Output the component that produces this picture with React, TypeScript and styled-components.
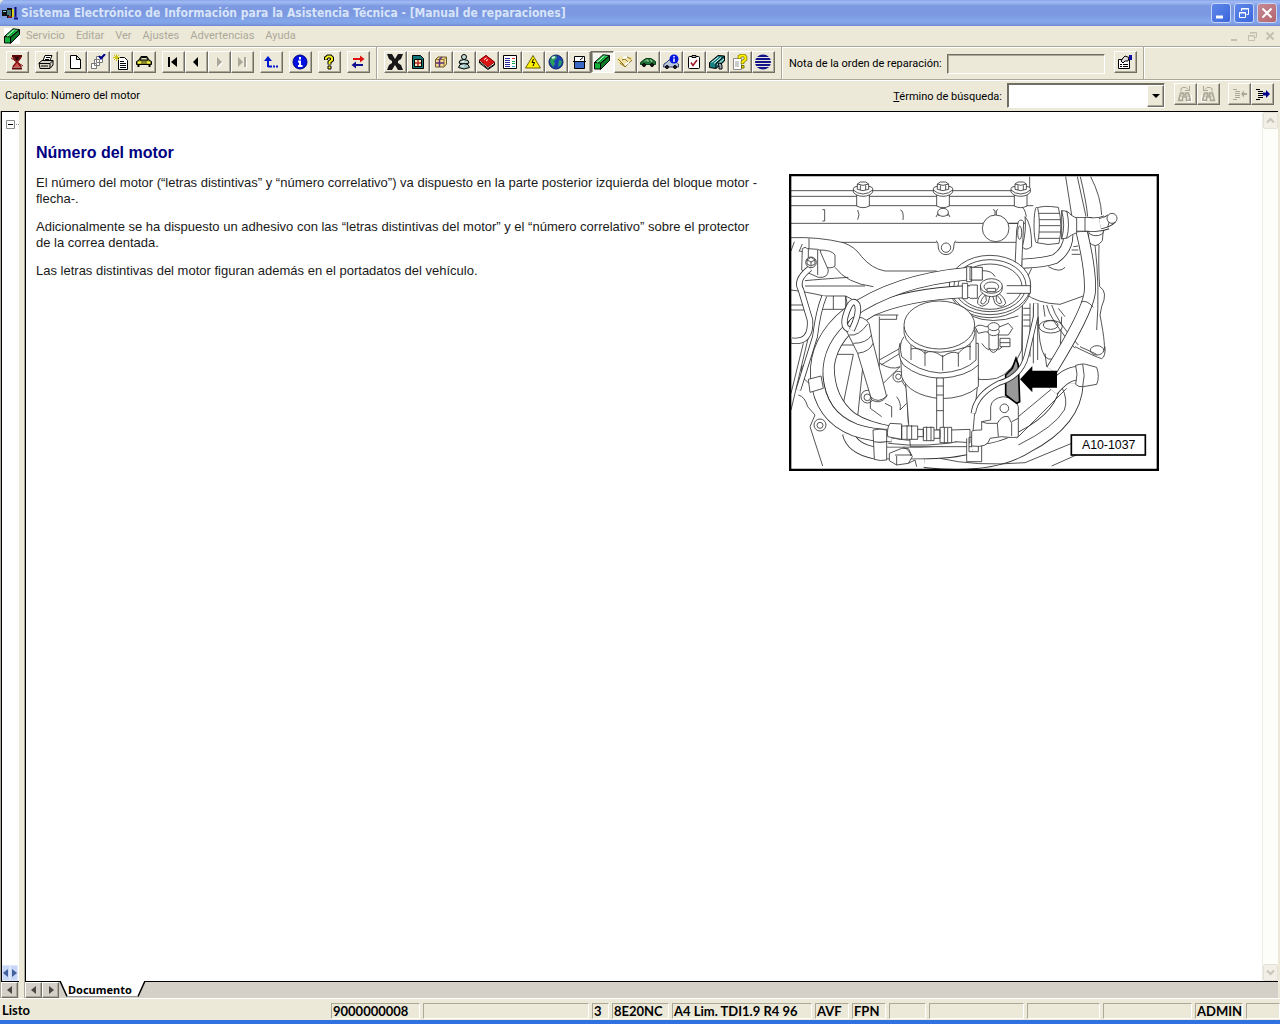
import React from "react";
import styled, { createGlobalStyle, css } from "styled-components";

const ui = `Roboto, "Noto Sans", sans-serif`;
const bold = `Lato, "Noto Sans", sans-serif`;
const face = "#ece9d8";
const shade = "#aca899";

const Global = createGlobalStyle`
  * { box-sizing: border-box; }
  body { margin: 0; background: ${face}; font: 11px/14px ${ui}; color: #000; }
  button, input, select { font: inherit; color: inherit; border-radius: 0; margin: 0; }
  svg { display: block; }
`;

const Window = styled.div`
  display: flex;
  flex-direction: column;
  height: 100vh;
  background: ${face};
  border-bottom: 4px solid #2f71e0;
`;

const TitleBar = styled.header`
  display: flex;
  align-items: center;
  gap: 3px;
  height: 26px;
  flex: none;
  padding: 0 3px 0 2px;
  background: linear-gradient(#8aa6ea 0, #a0bbf3 2px, #7d99e2 6px, #7b98e0 14px, #84a6ea 21px, #7e9fe5 24px, #6c86cf 26px);
  border-top-left-radius: 5px;
`;

const Title = styled.h1`
  flex: 1;
  margin: 0;
  color: #d8e4f8;
  font: bold 12px/18px "DejaVu Sans Condensed", "DejaVu Sans", sans-serif;
  white-space: nowrap;
  overflow: hidden;
`;

const WinButton = styled.button<{ $close?: boolean }>`
  width: 20px;
  height: 20px;
  padding: 0;
  display: grid;
  place-items: center;
  border: 1px solid #c7d4f5;
  border-radius: 3px;
  background: ${(p) => (p.$close ? "linear-gradient(135deg, #c58a96, #b5656b)" : "linear-gradient(135deg, #6088ea, #3a66dc)")};
`;

const MenuBar = styled.nav`
  display: flex;
  align-items: center;
  gap: 1px;
  height: 20px;
  flex: none;
  padding: 0 4px;
  color: ${shade};
`;

const MenuItem = styled.button`
  border: 0;
  background: none;
  padding: 0 5px;
  line-height: 16px;
  color: ${shade};
`;

const MdiIcon = styled.span`
  background: #fff;
`;

const MdiButtons = styled.div`
  display: flex;
  gap: 6px;
  margin-left: auto;
`;

const MdiButton = styled.button`
  border: 0;
  background: none;
  padding: 0;
  width: 12px;
  height: 12px;
`;

const ToolBar = styled.div`
  display: flex;
  align-items: stretch;
  height: 34px;
  flex: none;
  border-top: 1px solid ${shade};
  border-bottom: 1px solid ${shade};
  box-shadow: inset 0 1px #fff, 0 1px #fff;
`;

const Band = styled.div<{ $gap?: number }>`
  display: flex;
  align-items: center;
  gap: ${(p) => p.$gap ?? 0}px;
  padding: 0 6px 2px;
  border-right: 1px solid ${shade};
  box-shadow: 1px 0 #fff;
  & + & {
    padding-left: 7px;
  }
`;

const Group = styled.div`
  display: flex;
`;

const raised = css`
  border: 1px solid;
  border-color: #fff #716f64 #716f64 #fff;
  box-shadow: inset -1px -1px ${shade};
`;

const ToolButton = styled.button<{ $pressed?: boolean }>`
  ${raised}
  width: 23px;
  height: 22px;
  padding: 0 1px 1px 0;
  display: grid;
  place-items: center;
  background: ${face};
  ${(p) =>
    p.$pressed &&
    css`
      border-color: #716f64 #fff #fff #716f64;
      box-shadow: inset 1px 1px ${shade};
      background: #f7f6f0;
    `}
`;

const NoteInput = styled.input`
  width: 158px;
  height: 20px;
  border: 1px solid;
  border-color: #716f64 #fff #fff #716f64;
  box-shadow: inset 1px 1px ${shade};
  background: ${face};
`;

const NoteBand = styled(Band)`
  label { margin-right: 5px; padding-top: 3px; }
  input { margin-top: 3px; }
  button { margin-left: 9px; }
`;

const SearchBar = styled.div`
  display: flex;
  align-items: flex-start;
  height: 31px;
  flex: none;
  padding: 3px 6px 0 5px;
`;

const Chapter = styled.span`
  flex: 1;
  padding-top: 6px;
`;

const SearchLabel = styled.label`
  padding: 7px 5px 0 0;
`;

const Combo = styled.span`
  display: flex;
  position: relative;
  width: 158px;
  height: 25px;
  margin-right: 9px;
  select {
    appearance: none;
    width: 100%;
    height: 100%;
    padding: 0 18px 0 4px;
    background: #fff;
    border: 1px solid;
    border-color: #716f64 #fff #fff #716f64;
    box-shadow: inset 1px 1px #716f64;
  }
`;

const ComboArrow = styled.span`
  ${raised}
  position: absolute;
  right: 1px;
  top: 2px;
  bottom: 1px;
  width: 17px;
  display: grid;
  place-items: center;
  background: ${face};
  pointer-events: none;
`;

const SearchTools = styled.div`
  display: flex;
  margin-right: 8px;
  &:last-child { margin-right: 0; }
`;

const Body = styled.div`
  display: flex;
  flex: 1;
  min-height: 0;
  padding-right: 2px;
  gap: 5px;
`;

const pane = css`
  display: flex;
  flex-direction: column;
  border-left: 1px solid ${shade};
  > :first-child {
    border-top: 1px solid #000;
    border-left: 1px solid #000;
  }
`;

const TreePane = styled.aside`
  ${pane}
  width: 19px;
  background: #fff;
`;

const TreeArea = styled.div`
  flex: 1;
  display: flex;
  flex-direction: column;
  justify-content: space-between;
  align-items: flex-end;
  padding-top: 8px;
`;

const TreeNode = styled.button`
  width: 13px;
  height: 9px;
  padding: 0;
  border: 0;
  background: none;
`;

const MiniScroll = styled.div`
  display: flex;
  width: 17px;
  button {
    width: 8px;
    height: 16px;
    padding: 0;
    border: 1px solid #dfe8fb;
    background: #c8d6f8;
    display: grid;
    place-items: center;
  }
`;

const DocPane = styled.main`
  ${pane}
  flex: 1;
  min-width: 0;
`;

const DocArea = styled.div`
  flex: 1;
  min-height: 0;
  display: flex;
  background: #fff;
`;

const Article = styled.article`
  flex: 1;
  padding: 32px 0 0 10px;
  font: 13px/16px "Liberation Sans", Arial, sans-serif;
  color: #1a1a1a;
`;

const Heading = styled.h2`
  margin: 0;
  color: #000080;
  font-size: 16px;
  line-height: 18px;
`;

const Columns = styled.div`
  display: grid;
  grid-template-columns: minmax(0, 3fr) minmax(0, 2fr);
  padding-top: 12px;
`;

const Copy = styled.div`
  padding: 1px 12px 0 0;
  p { margin: 0 0 12px; }
`;

const Figure = styled.figure`
  margin: 0;
  padding-left: 17px;
  svg { max-width: 100%; }
`;

const ScrollBar = styled.div`
  width: 16px;
  flex: none;
  display: flex;
  flex-direction: column;
  justify-content: space-between;
  border-left: 1px solid #eeede5;
  background: #fdfdfa;
  button {
    width: 15px;
    height: 17px;
    padding: 0;
    display: grid;
    place-items: center;
    border: 1px solid #e4e2d8;
    border-radius: 2px;
    background: #f1efe6;
  }
`;

const TabStrip = styled.div`
  display: flex;
  height: 17px;
  flex: none;
  background: #d4d0c8;
  border-top: 1px solid #000;
`;

const TabArrow = styled.button`
  ${raised}
  width: 17px;
  height: 16px;
  padding: 0;
  display: grid;
  place-items: center;
  background: #d4d0c8;
`;

const Tab = styled.button`
  position: relative;
  width: 87px;
  height: 16px;
  margin-top: -1px;
  padding: 0 0 0 9px;
  border: 0;
  background: none;
  text-align: left;
  font: bold 11px/17px "Noto Sans", sans-serif;
  svg { position: absolute; left: 0; top: 0; z-index: 0; }
  span { position: relative; }
`;

const StatusBar = styled.footer`
  display: flex;
  gap: 3px;
  height: 22px;
  flex: none;
  padding: 4px 0 1px 1px;
  border-top: 1px solid #fff;
  font: bold 13px/15px ${bold};
`;

const StatusCell = styled.span<{ $w?: number }>`
  ${(p) =>
    p.$w
      ? css`
          width: ${p.$w}px;
          border: 1px solid;
          border-color: ${shade} #fff #fff ${shade};
        `
      : css`
          flex: 1;
        `}
  padding-left: 1px;
  white-space: nowrap;
  overflow: hidden;
`;

const Ic = ({ children, w = 16, h = 16 }: { children: React.ReactNode; w?: number; h?: number }) => (
  <svg width={w} height={h} viewBox={`0 0 ${w} ${h}`} fill="none" stroke="#000" aria-hidden="true">
    {children}
  </svg>
);

const GreenBox = () => (
  <Ic>
    <path d="M6.500 9.500 15.500 2V6.500L6.500 15.500Z" fill="#0c7a26" />
    <path d="M.5 8.500H6.500V15H.5Z" fill="#12b13a" />
    <path d="M.5 8.500 9 .8 15.500 1.500 6.500 9Z" fill="#30cf55" />
    <path d="M5 7.500 11 2.500" stroke="#0a3" strokeWidth="2" />
    <path d="M3 8.500 10.500 1.800" stroke="#fff" strokeWidth=".8" />
  </Ic>
);

const icons: Record<string, React.ReactNode> = {
  exit: (
    <Ic>
      <path d="M3 2H13M3 14.500H13" stroke="#5c0808" strokeWidth="2" />
      <path d="M4 3 12 13M12 3 4 13" stroke="#7a1010" strokeWidth="2" />
      <path d="M5 3H11L8 7Z" fill="#2a0505" stroke="none" />
      <path d="M8 9 11 13H5Z" fill="#d85050" stroke="none" />
      <path d="M2 4 14 12" stroke="#8c1515" />
    </Ic>
  ),
  print: (
    <Ic>
      <path d="M5 6.500 7 1.500H14L12 6.500Z" fill="#fff" />
      <path d="M1 9 4 6.500H15V11L12 14.500H2Z" fill="#d6d3c6" />
      <path d="M1 9.500H12V14M12 9.500 15 6.500M8 3.500H12M7 5.500H11M3 12H10" />
    </Ic>
  ),
  page: (
    <Ic>
      <path d="M3.500 1.500H9.500L13.500 5.500V14.500H3.500ZM9.500 1.500V5.500H13.500" fill="#fff" />
    </Ic>
  ),
  pages: (
    <Ic>
      <path d="M6.500 2.500H12.500V8.500H6.500ZM4.500 5.500H9.500V11.500H4.500ZM1.500 9.500H6.500V14.500H1.500Z" fill="#fff" stroke="#777" />
      <path d="M9 2 11 4.500 15 0" stroke="#00008b" strokeWidth="2" />
    </Ic>
  ),
  newPage: (
    <Ic>
      <path d="M5.500 3.500H11.500L14.500 6.500V15.500H5.500Z" fill="#fff" />
      <path d="M7 7.500H11M7 9.500H13M7 11.500H13M7 13.500H13" />
      <path d="M3.500 0V7M0 3.500H7M1 1 6 6M6 1 1 6" stroke="#cfc518" />
    </Ic>
  ),
  carFront: (
    <Ic>
      <path d="M3 6 5 2.500H11L13 6 15.500 7.500V10.500H.5V7.500Z" fill="#85852a" />
      <path d="M4 6 5.500 3.500H10.500L12 6Z" fill="#e3e3c0" />
      <path d="M2 8.500H5M11 8.500H14" stroke="#ffff40" strokeWidth="2" />
      <path d="M2.500 11V13M13.500 11V13" strokeWidth="2" />
    </Ic>
  ),
  first: (
    <Ic>
      <path d="M4 3V13" strokeWidth="2" />
      <path d="M12 3V13L6 8Z" fill="#000" stroke="none" />
    </Ic>
  ),
  prev: (
    <Ic>
      <path d="M10 3V13L5 8Z" fill="#000" stroke="none" />
    </Ic>
  ),
  next: (
    <Ic>
      <path d="M7 4V14L12 9Z" fill="#fff" stroke="none" />
      <path d="M6 3V13L11 8Z" fill={shade} stroke="none" />
    </Ic>
  ),
  last: (
    <Ic>
      <path d="M4 3V13L9 8Z" fill={shade} stroke="none" />
      <path d="M11 3V13" stroke={shade} strokeWidth="2" />
      <path d="M12.500 4V14" stroke="#fff" />
    </Ic>
  ),
  up: (
    <Ic>
      <path d="M5 13V4M5 12.500H9" stroke="#0018d0" strokeWidth="2" />
      <path d="M5 2 1 7H9Z" fill="#0018d0" stroke="none" />
      <path d="M10 12.500H12M13 12.500H15" stroke="#0018d0" strokeWidth="2" />
    </Ic>
  ),
  info: (
    <Ic>
      <circle cx="8" cy="8" r="7" fill="#0010e0" stroke="#000080" />
      <path d="M8 3V5.500M6 7.500H8V12M6 12H10.500" stroke="#fff" strokeWidth="2" />
    </Ic>
  ),
  help: (
    <Ic>
      <path d="M5 6V4L7 2.500H9.500L11 4V6L8.500 8V10.500" strokeWidth="4" />
      <path d="M5 5.500V4L7 2.500H9.500L11 4V6L8.500 8V10" stroke="#f5ee20" strokeWidth="2" />
      <path d="M7 12H10V15H7Z" fill="#f5ee20" />
    </Ic>
  ),
  swap: (
    <Ic>
      <path d="M3 5H11" stroke="#e01010" strokeWidth="2" />
      <path d="M10 1.500 14.500 5 10 8.500Z" fill="#e01010" stroke="none" />
      <path d="M5 11H13" stroke="#101090" strokeWidth="2" />
      <path d="M6 7.500 1.500 11 6 14.500Z" fill="#101090" stroke="none" />
    </Ic>
  ),
  cross: (
    <Ic>
      <path d="M0 0H5L8 5 11 0H16L14 5 11 7 11 9 14 11 16 16H11L8 11 5 16H0L2 11 5 9V7L2 5Z" fill="#171717" stroke="none" />
    </Ic>
  ),
  docBox: (
    <Ic>
      <path d="M2.500 1.500H10.500L13.500 4.500V14.500H2.500Z" fill="#147878" />
      <path d="M4.500 5.500H11.500V12.500H4.500Z" fill="#f8f0c0" />
      <path d="M8 6V12M5 9H11" stroke="#b02828" strokeWidth="1.500" />
    </Ic>
  ),
  parcel: (
    <Ic>
      <path d="M2.500 5.500 5 3H13.500V10L11 13H2.500Z" fill="#f3d98c" stroke="#6b5a2a" />
      <path d="M3 5.500H11V13M11 5.500 13.500 3" stroke="#8c7030" />
      <path d="M6.500 5V13M6.500 5.500 9 3M3 9H11" stroke="#5a3080" strokeWidth="1.500" />
    </Ic>
  ),
  figure: (
    <Ic>
      <circle cx="8" cy="3" r="2.500" fill="#c4dedb" />
      <path d="M4 6.500 8 5.500 12 6.500 13 9 8 10.500 3 9Z" fill="#b6d4d0" />
      <path d="M4 10.500 8 9.500 12 10.500 13.500 13.500 8 15 2.500 13.500Z" fill="#a3c8c4" />
      <path d="M6 7.500H8M5 12H8" stroke="#fff" />
    </Ic>
  ),
  book: (
    <Ic>
      <path d="M.5 6.500 7 1.500 15.500 8.500V11L9 15.500 .5 9Z" fill="#fff" />
      <path d="M.5 6 7 1.500 15.500 8 9 13Z" fill="#dd1414" stroke="#900" />
      <path d="M5 5.500 7.500 4M7 7 9 5.500" stroke="#fff" />
      <path d="M1 8 9 14.500 15 10.500" />
    </Ic>
  ),
  list: (
    <Ic>
      <path d="M1.500 1.500H14.500V14.500H1.500Z" fill="#fff" />
      <path d="M3 4.500H8M3 6.500H8M3 8.500H8M3 10.500H8M3 12.500H8" stroke="#282898" />
      <path d="M10 4.500H13" stroke="#e03030" />
      <path d="M10 7.500H13M10 9.500H13" stroke="#16a050" />
      <path d="M10 12.500H13" stroke="#30a0d0" />
    </Ic>
  ),
  warning: (
    <Ic>
      <path d="M8 1.500 15.500 14H.5Z" fill="#fff000" stroke="#6a6400" />
      <path d="M8.500 5 7 8.500H9.500L8 12" />
    </Ic>
  ),
  globe: (
    <Ic>
      <circle cx="8" cy="8" r="7" fill="#1c3fb2" stroke="#0b2060" />
      <path d="M3 3 8 1.500 9 4 6 7 7 10 5 13 2 8Z" fill="#2ba05a" stroke="none" />
      <path d="M11 6 14 7 13 11 10 13Z" fill="#27a064" stroke="none" />
      <path d="M4 4 7 3" stroke="#d8f0e8" strokeWidth="2" />
    </Ic>
  ),
  tray: (
    <Ic>
      <path d="M3.500 2.500H13.500V7.500H3.500Z" fill="#fff" />
      <path d="M3.500 7.500H13.500V14.500H3.500Z" fill="#3a68c4" />
      <path d="M9 6 12 3.500M2 7.500H15" />
    </Ic>
  ),
  green: <GreenBox />,
  handshake: (
    <Ic>
      <path d="M0 5 4 2 8 5 15 2.500 16 5 8 13.500 2 10Z" fill="#f2e4a4" stroke="none" />
      <path d="M1 5 6 10 8 13 15 6M5 6 8 5 11 8M3 9 7 12M10 3 14 5" stroke="#8a6f22" />
      <path d="M6 4 10 3M12 8 8 11" stroke="#fff" strokeWidth="2" />
    </Ic>
  ),
  carSide: (
    <Ic>
      <path d="M.5 8.500 3 6.500 6 4.500H11L15.500 7.500V10.500H.5Z" fill="#1d7434" stroke="#0b4018" />
      <path d="M5 7.500 6.500 6H8V8M10 6H11L12 8" stroke="#b0d8b0" />
      <circle cx="4" cy="11" r="1.500" fill="#222" />
      <circle cx="12" cy="11" r="1.500" fill="#222" />
    </Ic>
  ),
  carInfo: (
    <Ic>
      <path d="M1 10 4 8 6 6H11L15.500 10V13H.5Z" fill="#b8c4dc" stroke="#34406a" />
      <circle cx="4" cy="13" r="1.500" fill="#223" />
      <circle cx="12" cy="13" r="1.500" fill="#223" />
      <circle cx="11" cy="5" r="4.500" fill="#0014e0" stroke="none" />
      <path d="M11 2V3.500M11 4.500V8" stroke="#fff" strokeWidth="1.500" />
    </Ic>
  ),
  clipboard: (
    <Ic>
      <rect x="2.500" y="2.500" width="11" height="12" rx="1" fill="#fff" />
      <path d="M6 1.500H10V3.500H6Z" fill="#bbb" />
      <path d="M5 8.500 7 11.500 11 6" stroke="#a01020" strokeWidth="1.500" />
    </Ic>
  ),
  books: (
    <Ic>
      <path d="M.5 8.500 9 1.500 15.500 2V7L7 14.500 .5 13.500Z" fill="#168080" />
      <path d="M2.500 8.500 9.500 3M5 9.500 12 3.500M7.500 11 15 5" stroke="#e8f4f4" />
      <path d="M7 9.500V14M7 9.500 15 2.500" />
      <path d="M9 9.500 11 9 13 11V15H10V12Z" fill="#9aacb8" />
    </Ic>
  ),
  helpDoc: (
    <Ic>
      <path d="M1.500 4.500H9.500V15.500H1.500Z" fill="#fff" stroke="#8a8a8a" />
      <path d="M3 8H7M3 10H7M3 12H7" stroke="#999" />
      <path d="M7.500 5V2.500L9.500 1.500H12L13.500 3V5.500L10.500 8V10" stroke="#6d6800" strokeWidth="3.500" />
      <path d="M7.500 4.500V2.500L9.500 1.500H12L13.500 3V5.500L10.500 8V9.500" stroke="#fff000" strokeWidth="2.200" />
      <path d="M9.500 11.500H12V14H9.500Z" fill="#fff000" stroke="#6d6800" />
    </Ic>
  ),
  stripes: (
    <Ic>
      <ellipse cx="8" cy="8" rx="8" ry="7.500" fill="#13138c" stroke="none" />
      <path d="M0 3.500H16M0 6.500H16M0 9.500H16M0 12.500H16" stroke={face} />
    </Ic>
  ),
  props: (
    <Ic>
      <path d="M1.500 5.500H12.500V14.500H1.500Z" fill="#fff" />
      <path d="M3 10.500H5M6 10.500H11M3 12.500H5M6 12.500H11M4 7 6 4 8 2 12 3.500 11 7H8L6 9Z" fill="#ddd" />
      <path d="M13.500 1V6" stroke="#1010a0" strokeWidth="3" />
    </Ic>
  ),
};

const Binoculars = ({ flip }: { flip?: boolean }) => (
  <Ic>
    <g transform={flip ? "matrix(-1 0 0 1 16 0)" : undefined} stroke={shade}>
      <path d="M4 5.500V2.500L6 1.500H9L11 3.500M8 4.500H12.500M12.500 0V5" />
      <path d="M3.500 7H6.500V9H8.500V7H11.500L13.500 14.500H9.500V11H5.500V14.500H1.500Z" fill="#d5d1c1" strokeWidth="1.500" />
      <path d="M4 11V13M11 11V13M14.500 9V15.500H10" stroke="#fff" />
    </g>
  </Ic>
);

const ListArrow = ({ right }: { right?: boolean }) => (
  <Ic>
    <g stroke={right ? "#000" : shade}>
      <path d="M2 3.500H6M4 5.500H9M4 7.500H9M4 9.500H9M4 11.500H9M2 13.500H6" />
      {right ? (
        <path d="M9 6.500H12V4L16 8 12 12V9.500H9Z" fill="#00008b" stroke="none" />
      ) : (
        <path d="M16 7H13V4.500L10 8 13 11.500V9H16Z" fill={shade} stroke="none" />
      )}
    </g>
  </Ic>
);

const Triangle = ({ right, color = "#4b4943" }: { right?: boolean; color?: string }) => (
  <Ic w={6} h={8}>
    <path d={right ? "M1 0V8L6 4Z" : "M5 0V8L0 4Z"} fill={color} stroke="none" />
  </Ic>
);

const Chevron = ({ down }: { down?: boolean }) => (
  <Ic w={9} h={7}>
    <path d={down ? "M1 1.500 4.500 5 8 1.500" : "M1 5.500 4.500 2 8 5.500"} stroke="#c9c6ba" strokeWidth="2" />
  </Ic>
);

/* A pipe is a dark stroke with a slightly thinner white one on top. */
const Pipe = ({ d, w }: { d: string; w: number }) => (
  <g fill="none">
    <path d={d} strokeWidth={w + 2} />
    <path d={d} stroke="#fff" strokeWidth={w - 3} />
  </g>
);

const Bolt = ({ x }: { x: number }) => (
  <g transform={`translate(${x} 0)`}>
    <path d="M-19 75V108Q0 118 19 108V75" />
    <path d="M-29 56Q-29 50 -17 49H17Q29 50 29 56V66Q22 78 0 79Q-22 78 -29 66Z" />
    <path d="M-29 60Q-18 71 0 72Q18 71 29 60" fill="none" />
    <path d="M-17 42V58Q0 66 17 58V42L8 36H-8ZM-17 42Q0 50 17 42M-8 46V60M8 46V60" />
  </g>
);

const Engine = () => (
  <svg width="370" height="297" viewBox="12 12 1110 891" role="img" aria-label="A10-1037" fill="#fff" stroke="#333" strokeWidth="2.500">
    <rect x="12" y="12" width="1110" height="891" stroke="none" />
    <g>
      {/* cylinder head */}
      <path d="M18 62H690M18 79H690M18 107H745M18 160H720M170 217H455M511 217H700" fill="none" />
      <path d="M112 119H119V153H112M218 120Q226 134 218 149M346 120Q357 122 354 150" fill="none" />
      <path d="M453 141 461 126M487 126 495 141M459 136H490" />
      <ellipse cx="474" cy="127" rx="16" ry="12" />
      <path d="M453 212Q460 216 460 234Q464 253 483 254Q502 253 506 234Q506 216 512 212" />
      <circle cx="483" cy="233" r="14" />
      <path d="M18 203Q100 200 175 218Q210 230 230 260Q260 296 300 303H455" fill="none" />
      <path d="M734 20V65M705 108Q720 112 724 140" fill="none" />
      <Bolt x={234} />
      <Bolt x={474} />
      <Bolt x={707} />
      <circle cx="632" cy="175" r="40" />
      <path d="M624 118 630 122V135M639 118 634 122V135M671 160H704" fill="none" />

      {/* long lines behind the hoses on the right */}
      <path d="M842 20 860 135M877 20 903 140M886 20Q905 100 908 140M917 20Q948 80 950 135" fill="none" />
      <path d="M720 370Q755 400 825 403L895 378" fill="none" />
      <path d="M860 240H880M865 230 880 228M860 253H885M790 290Q825 310 840 292M740 295 728 320" fill="none" />
      <path d="M930 225Q945 350 935 480M942 225Q940 300 944 350Q970 365 950 410L945 435Q965 540 955 545" fill="none" />
      <path d="M911 190V215Q932 240 952 212L955 180" />
      <ellipse cx="933" cy="185" rx="22" ry="12" />
      <ellipse cx="936" cy="541" rx="20" ry="14" />
      <path d="M870 530Q930 560 950 566Q962 560 960 530M885 530Q925 548 935 553" fill="none" />

      {/* lower right pipes and bracket */}
      <Pipe w={70} d="M420 858Q620 880 720 815Q855 745 860 640" />
      <path d="M700 740 820 640M695 805 845 655M700 825Q810 770 838 720Q850 690 830 650M465 865Q570 890 720 878L860 820M800 888 930 830" fill="none" />
      <Pipe w={41} d="M800 660Q850 600 890 612" />
      <path d="M872 586Q895 580 902 583L935 592Q945 620 935 643L895 650Q880 652 872 643Q880 612 872 586Z" />
      <path d="M893 583Q902 618 893 650" fill="none" />
      <path d="M760 440Q760 530 780 560Q800 580 825 550L830 440" />
      <ellipse cx="797" cy="470" rx="35" ry="19" />
      <ellipse cx="797" cy="465" rx="22" ry="13" />
      <path d="M780 550 785 590M825 550 820 585M785 405Q795 450 870 535M800 405Q815 455 880 525" fill="none" />
      <Pipe w={34} d="M890 185Q920 310 914 370Q905 430 800 600" />
      <path d="M888 396Q905 388 925 412" fill="none" />
      <path d="M712 400V590M735 400V560M745 410V580M758 400V570M715 415H735M715 435H735M715 450H735M715 468H735M775 405 780 440M820 415 840 440" fill="none" />

      {/* coolant cap and its outlets */}
      <Pipe w={28} d="M850 195Q850 240 810 267Q780 278 712 281" />
      <Pipe w={42} d="M869 163H910Q940 167 965 157" />
      <Pipe w={32} d="M945 161Q970 156 980 145" />
      <path d="M900 141V186M968 142Q976 158 968 172" fill="none" />
      <circle cx="981" cy="145" r="15" />
      <path d="M830 122Q850 122 858 135L875 145V188L860 195Q850 206 830 207Z" />
      <path d="M830 122Q842 165 830 207M845 122Q856 165 845 205" fill="none" />
      <path d="M755 115Q770 105 820 112Q834 165 822 220Q790 228 755 218Z" />
      <path d="M757 130H823M757 167H826M757 149H826M757 186H826M757 205H824" fill="none" />
      <ellipse cx="755" cy="165" rx="8" ry="54" />
      <path d="M720 140Q740 160 740 230Q720 245 712 230Q725 180 720 140Z" />
      <path d="M700 155Q708 145 716 155L710 290H690L695 180Z" />
      <ellipse cx="704" cy="188" rx="6" ry="20" />

      {/* left side brackets and sensor */}
      <path d="M18 243 28 215M42 245 52 222M44 243 55 246M72 205V245" fill="none" />
      <path d="M105 240Q140 240 150 255V288Q140 298 110 290Z" />
      <path d="M52 236Q60 228 68 236L98 238Q108 238 108 250L130 300Q130 325 100 322L50 300Z" />
      <path d="M70 236V285M98 240V315" fill="none" />
      <path d="M150 292Q185 340 265 350M60 332Q100 328 190 322M60 348H240M18 360Q60 365 118 378M18 405H60M18 420H60" fill="none" />
      <path d="M118 378H182V418H110M182 378Q190 400 182 418M145 378V418" fill="none" />
      <path d="M182 378 205 390" fill="none" />
      <path d="M18 720 80 460M18 670 55 520M40 675Q60 680 68 710L90 735 75 770 113 888M70 580 50 590V620L72 640" fill="none" />
      <Pipe w={17} d="M75 295Q30 330 48 360L75 450Q80 520 20 512" />
      <Pipe w={15} d="M118 378Q100 420 90 500L40 660" />
      <circle cx="78" cy="277" r="16" />
      <path d="M66 270 78 262 90 270V282L78 288 66 282ZM66 270 78 276 90 270M78 276V287" />

      {/* rear structure between the hoses */}
      <path d="M145 525H240L218 740M145 553H205L173 710M283 440V590M340 435H250M335 435V448H285" fill="none" />
      <path d="M283 570 345 535M288 585 345 550M285 580Q320 602 345 590M295 640 345 590" fill="none" />
      <path d="M345 625 365 655 370 760M335 680Q350 700 345 720L365 700" fill="none" />
      <circle cx="340" cy="620" r="16" />
      <circle cx="340" cy="620" r="8" />

      {/* fuel filter */}
      <path d="M560 405V620Q580 635 635 625Q680 610 710 540L712 400Z" />
      <ellipse cx="615" cy="351" rx="122" ry="92" />
      <ellipse cx="615" cy="345" rx="122" ry="89" />
      <ellipse cx="615" cy="347" rx="108" ry="78" />
      <ellipse cx="615" cy="350" rx="96" ry="68" />

      {/* big coolant hoses */}
      <Pipe w={36} d="M190 790Q200 835 270 849H395Q500 850 560 832" />
      <Pipe w={36} d="M575 365H545Q370 372 260 420Q140 490 130 590Q130 690 200 745Q290 805 550 800" />
      <Pipe w={38} d="M592 311H550Q330 330 190 430Q90 510 95 620Q105 740 210 780Q260 797 320 797" />
      <path d="M70 628 108 618 115 655 75 667Z" />
      <circle cx="105" cy="765" r="18" />
      <circle cx="105" cy="766" r="9" />

      {/* hose ends and bleed screw on the fuel filter */}
      <path d="M592 302Q622 302 630 320M555 292H592V330H555ZM555 345H577V385H555M665 347H736V370H665M545 290H560V335H545ZM532 340H548V386H532Z" />
      <path d="M600 365Q575 380 578 400Q590 418 610 398L615 375ZM632 365Q660 380 662 400Q650 418 630 400L622 375Z" />
      <path d="M602 374Q585 390 588 400Q596 406 604 392ZM634 374Q650 388 650 398Q642 406 634 392Z" />
      <ellipse cx="619" cy="355" rx="33" ry="25" />
      <ellipse cx="619" cy="348" rx="33" ry="22" />
      <ellipse cx="619" cy="350" rx="22" ry="14" />
      <path d="M606 355H632V365H606Z" />
      <path d="M560 438Q620 465 700 438M590 520Q600 535 612 540M640 540Q650 535 665 515" fill="none" />
      <path d="M571 472Q580 460 602 470H645L670 460 683 475 670 495H642L602 485 580 490Z" />
      <path d="M612 485V535Q624 560 640 535V485ZM645 505H675V530H645ZM645 518H675M612 535Q625 545 640 535" />
      <ellipse cx="626" cy="485" rx="17" ry="12" />
      <ellipse cx="626" cy="470" rx="17" ry="12" />

      {/* dipstick */}
      <circle cx="247" cy="680" r="19" />
      <circle cx="247" cy="682" r="10" />
      <path d="M183 480Q190 440 215 440Q255 445 255 475L262 510 305 680Q285 705 260 690L218 550Z" />
      <Pipe w={17} d="M192 478Q165 470 192 410Q205 385 217 405Q225 430 200 480" />
      <path d="M193 495Q220 500 248 462M205 520Q245 520 260 495M218 550Q255 545 264 520M256 680Q280 705 308 675M256 690V715L290 740M300 700 320 710V742" fill="none" />

      {/* oil filter */}
      <path d="M362 640 376 830H560L568 740 580 620Z" />
      <path d="M345 520 350 620Q370 675 465 686Q540 686 580 650V520Z" />
      <path d="M345 520Q335 555 355 585Q400 622 465 625Q545 620 580 585" />
      <path d="M357 500Q340 520 350 560Q400 605 465 609Q540 605 573 570V480" />
      <path d="M378 525V570M420 540V588M378 537Q400 530 420 550Q440 535 473 560Q500 540 520 550Q540 525 558 530M473 555V602M520 548V590M555 520V570" fill="none" />
      <path d="M357 470Q352 515 395 535Q465 560 540 532Q575 515 569 470" />
      <ellipse cx="463" cy="465" rx="106" ry="72" />
      <path d="M455 624V780H475V624ZM455 648H475M455 675H475M455 722H475" />

      {/* coupling and clamps at the bottom */}
      <path d="M310 820Q430 835 545 810" fill="none" />
      <path d="M315 760 350 762V808L308 800Q305 775 315 760ZM350 768 398 768V808L350 808ZM366 765V808M380 765V808M398 778H415V800H398M415 772H447V812H415ZM425 770V812M438 770V812M447 780H465V805H447M465 772H500V818H465ZM478 772V818M488 774V818M500 780 555 778V818L510 815" />
      <path d="M264 780Q285 775 305 780V870Q285 874 268 868ZM266 815Q285 820 305 815" />
      <path d="M313 850 350 835H370L382 860 370 880 335 885 313 872ZM330 855H380M335 858V885M355 832Q375 840 378 858M370 880 390 870 395 890" />
      <path d="M545 805V875H590V805M552 802H580V845H552Z" />
      <path d="M560 785Q560 780 590 780V755L617 750V710Q620 685 655 680Q695 685 700 710V800Q695 805 650 800L615 805Q610 835 560 828Z" />
      <path d="M590 755 605 760H637L640 800M637 760Q650 735 670 740L680 760V798M680 755 700 745" fill="none" />
      <circle cx="658" cy="715" r="13" />

      {/* stamped code area, its feed line and the arrow */}
      <path d="M693 565 700 585 704 695 695 700 662 675V615L682 595Z" fill="#999" stroke="#000" strokeWidth="5" />
      <Pipe w={14} d="M565 730Q572 675 640 640Q710 620 725 555L752 440V400" />
      <path d="M705 628 742 588V602H816V653H742V667Z" fill="#000" stroke="none" />
    </g>
    <rect x="859" y="795" width="222" height="60" stroke="#000" strokeWidth="5" />
    <text x="971" y="838" textAnchor="middle" fontFamily="'Liberation Sans', Arial, sans-serif" fontSize="37" fill="#000" stroke="none">
      A10-1037
    </text>
    <path d="M0 0H1140V920H0ZM19 19V896H1115V19Z" fill="#000" fillRule="evenodd" stroke="none" />
  </svg>
);

const singles: [string, string][] = [
  ["up", "Subir"],
  ["info", "Información"],
  ["help", "Ayuda"],
  ["swap", "Cambiar"],
];
const modules = ["cross", "docBox", "parcel", "figure", "book", "list", "warning", "globe", "tray", "green", "handshake", "carSide", "carInfo", "clipboard", "books", "helpDoc", "stripes"];
const status: [number, string][] = [
  [89, "9000000008"], [166, ""], [17, "3"], [57, "8E20NC"], [140, "A4 Lim. TDI1.9 R4 96"], [34, "AVF"], [34, "FPN"],
  [37, ""], [95, ""], [73, ""], [89, ""], [48, "ADMIN"], [34, ""],
];

const Tools = ({ names }: { names: string[] }) => (
  <Group>
    {names.map((n) => (
      <ToolButton key={n} aria-label={n} $pressed={n === "green"}>
        {icons[n]}
      </ToolButton>
    ))}
  </Group>
);

export default function App() {
  return (
    <Window>
      <Global />
      <TitleBar>
        <Ic>
          <path d="M0 5H5V11H0ZM5 3H10V13H5Z" fill="#111" stroke="none" />
          <path d="M1 6.500H4M6 5V10M8 5V11" stroke="#7ce0e8" />
          <path d="M10 4H12V12H10Z" fill="#d8d020" stroke="none" />
          <path d="M13.500 2V12M12 13.500H16" stroke="#101080" strokeWidth="2" />
          <path d="M6 12H10" stroke="#e03030" />
        </Ic>
        <Title>Sistema Electrónico de Información para la Asistencia Técnica - [Manual de reparaciones]</Title>
        <WinButton aria-label="Minimizar">
          <Ic><path d="M3 12H10" stroke="#fff" strokeWidth="3" /></Ic>
        </WinButton>
        <WinButton aria-label="Restaurar">
          <Ic><path d="M5.500 6V3.500H12.500V9.500H10.500M5 4H13M3.500 7.500H9.500V12.500H3.500ZM3 8H10" stroke="#fff" /></Ic>
        </WinButton>
        <WinButton $close aria-label="Cerrar">
          <Ic><path d="M3.500 3.500 12.500 12.500M12.500 3.500 3.500 12.500" stroke="#fff" strokeWidth="2" /></Ic>
        </WinButton>
      </TitleBar>

      <MenuBar>
        <MdiIcon><GreenBox /></MdiIcon>
        {["Servicio", "Editar", "Ver", "Ajustes", "Advertencias", "Ayuda"].map((m) => (
          <MenuItem key={m}>{m}</MenuItem>
        ))}
        <MdiButtons>
          <MdiButton aria-label="Minimizar documento"><Ic w={12} h={12}><path d="M3 10H9" stroke="#c4c0b2" strokeWidth="2" /></Ic></MdiButton>
          <MdiButton aria-label="Restaurar documento"><Ic w={12} h={12}><path d="M4.500 4V2.500H10.500V7.500H9M4 3H11M2.500 5.500H8.500V10.500H2.500ZM2 6H9" stroke="#c4c0b2" /></Ic></MdiButton>
          <MdiButton aria-label="Cerrar documento"><Ic w={12} h={12}><path d="M2.500 2.500 9.500 9.500M9.500 2.500 2.500 9.500" stroke="#c4c0b2" strokeWidth="2" /></Ic></MdiButton>
        </MdiButtons>
      </MenuBar>

      <ToolBar>
        <Band $gap={6}>
          <Tools names={["exit"]} />
          <Tools names={["print"]} />
          <Tools names={["page", "pages", "newPage", "carFront"]} />
          <Tools names={["first", "prev", "next", "last"]} />
          {singles.map(([n, label]) => (
            <ToolButton key={n} aria-label={label}>{icons[n]}</ToolButton>
          ))}
        </Band>
        <Band>
          <Tools names={modules} />
        </Band>
        <NoteBand>
          <label htmlFor="note">Nota de la orden de reparación:</label>
          <NoteInput id="note" />
          <ToolButton aria-label="Propiedades">{icons.props}</ToolButton>
        </NoteBand>
      </ToolBar>

      <SearchBar>
        <Chapter>Capítulo: Número del motor</Chapter>
        <SearchLabel htmlFor="term"><u>T</u>érmino de búsqueda:</SearchLabel>
        <Combo>
          <select id="term" />
          <ComboArrow><Ic w={8} h={4}><path d="M0 0H8L4 4Z" fill="#000" stroke="none" /></Ic></ComboArrow>
        </Combo>
        <SearchTools>
          <ToolButton aria-label="Buscar siguiente"><Binoculars /></ToolButton>
          <ToolButton aria-label="Buscar anterior"><Binoculars flip /></ToolButton>
        </SearchTools>
        <SearchTools>
          <ToolButton aria-label="Lista anterior"><ListArrow /></ToolButton>
          <ToolButton aria-label="Lista siguiente"><ListArrow right /></ToolButton>
        </SearchTools>
      </SearchBar>

      <Body>
        <TreePane>
          <TreeArea>
            <TreeNode aria-label="Contraer">
              <Ic w={13} h={9}>
                <path d="M.5 .5H8.500V8.500H.5Z" fill="#fff" stroke="#8a8a8a" />
                <path d="M2 4.500H7" />
                <path d="M10 4.500H13" stroke="#999" strokeDasharray="1 1" />
              </Ic>
            </TreeNode>
            <MiniScroll>
              <button aria-label="Izquierda"><Triangle color="#42609c" /></button>
              <button aria-label="Derecha"><Triangle right color="#42609c" /></button>
            </MiniScroll>
          </TreeArea>
          <TabStrip>
            <TabArrow aria-label="Ficha anterior"><Triangle /></TabArrow>
          </TabStrip>
        </TreePane>
        <DocPane>
          <DocArea>
            <Article>
              <Heading>Número del motor</Heading>
              <Columns>
                <Copy>
                  <p>El número del motor (“letras distintivas” y “número correlativo”) va dispuesto en la parte posterior izquierda del bloque motor -<wbr />flecha-.</p>
                  <p>Adicionalmente se ha dispuesto un adhesivo con las “letras distintivas del motor” y el “número correlativo” sobre el protector de la correa dentada.</p>
                  <p>Las letras distintivas del motor figuran además en el portadatos del vehículo.</p>
                </Copy>
                <Figure><Engine /></Figure>
              </Columns>
            </Article>
            <ScrollBar>
              <button aria-label="Arriba"><Chevron /></button>
              <button aria-label="Abajo"><Chevron down /></button>
            </ScrollBar>
          </DocArea>
          <TabStrip>
            <TabArrow aria-label="Ficha anterior"><Triangle /></TabArrow>
            <TabArrow aria-label="Ficha siguiente"><Triangle right /></TabArrow>
            <Tab>
              <Ic w={87} h={16}>
                <path d="M1 0 8 15.500H79L86 0Z" fill="#fff" stroke="none" />
                <path d="M1 0 8 15.500M79 15.500 86 0" strokeWidth="1.500" />
                <path d="M8 15.500H79" stroke="#999" />
              </Ic>
              <span>Documento</span>
            </Tab>
          </TabStrip>
        </DocPane>
      </Body>

      <StatusBar>
        <StatusCell>Listo</StatusCell>
        {status.map(([w, t], i) => (
          <StatusCell key={i} $w={w}>{t}</StatusCell>
        ))}
      </StatusBar>
    </Window>
  );
}
